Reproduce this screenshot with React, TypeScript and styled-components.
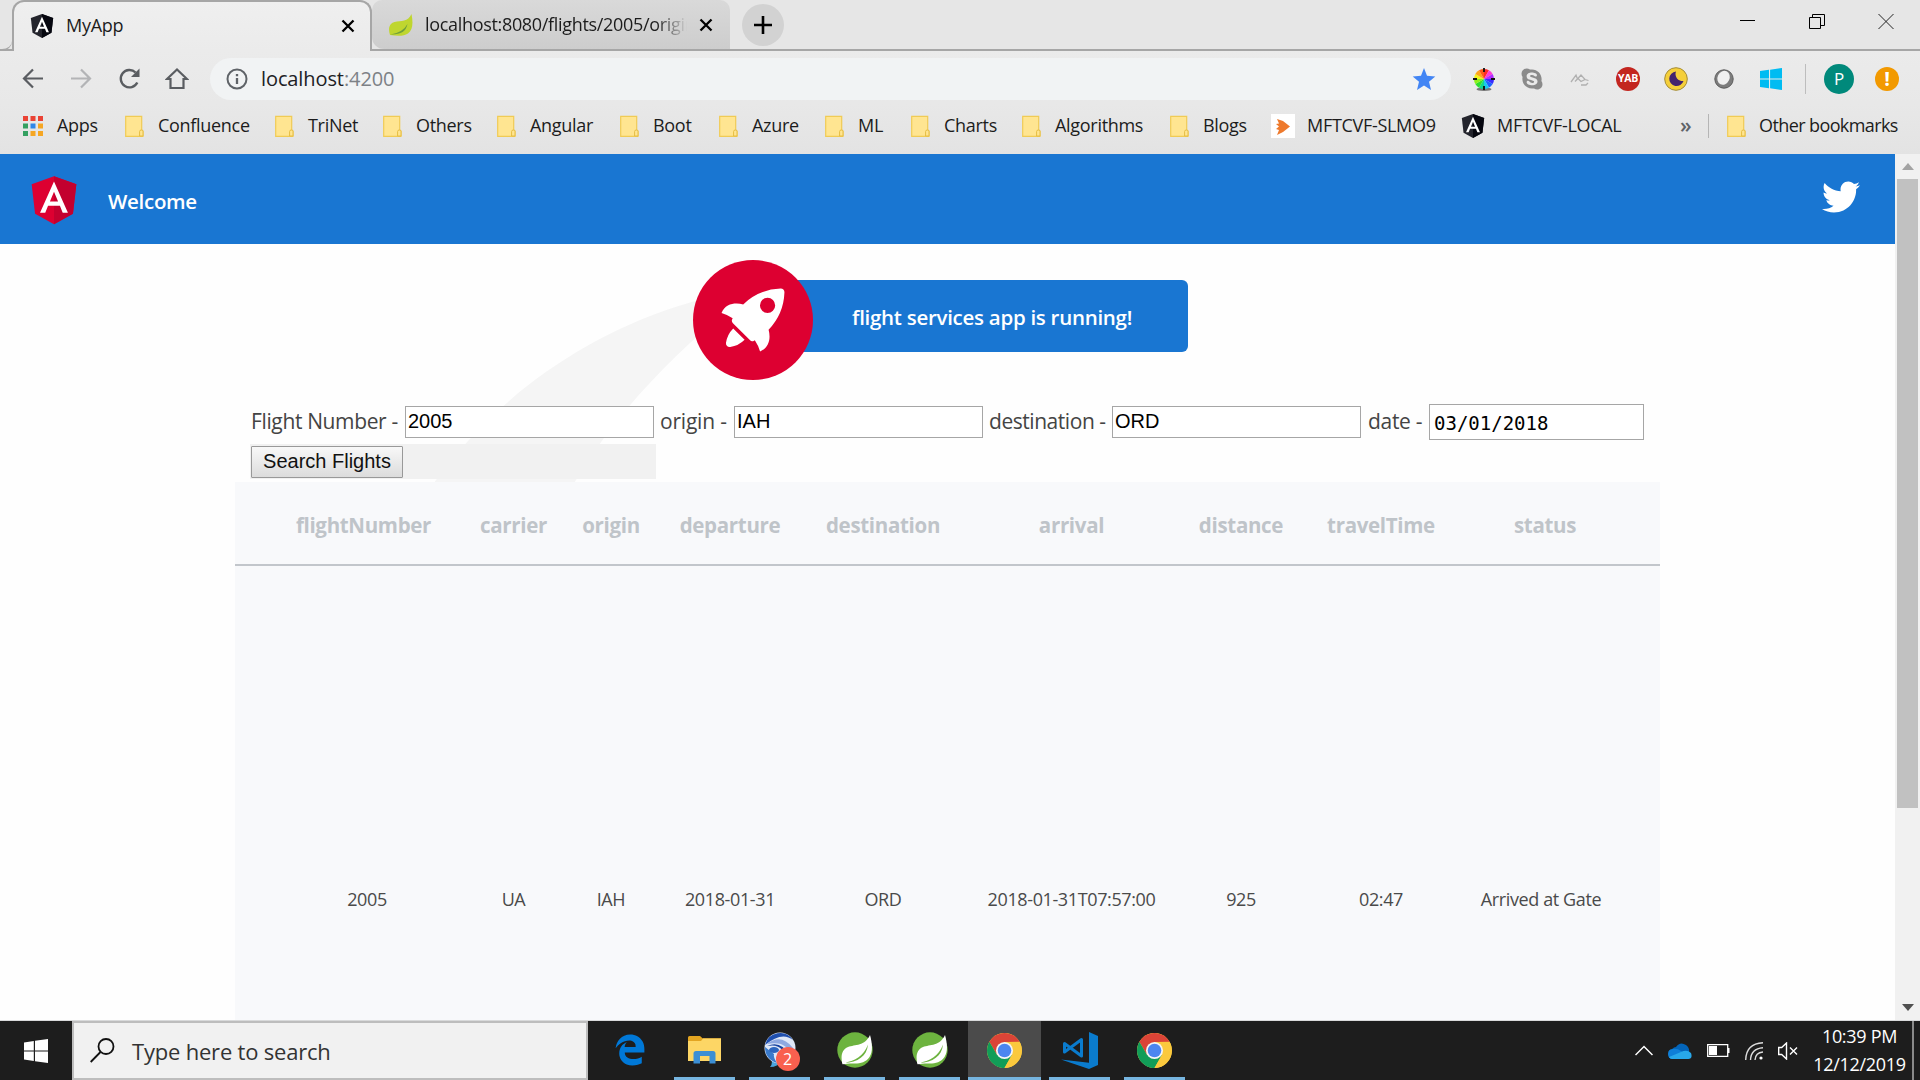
import React from "react";
import styled, { createGlobalStyle } from "styled-components";
import { FaTwitter, FaEdgeLegacy, FaSkype } from "react-icons/fa";

const ui = `"Segoe UI", "Open Sans", "Noto Sans", sans-serif`;
const arial = `"Liberation Sans", Arial, sans-serif`;

const GlobalStyle = createGlobalStyle`
  *, *::before, *::after { box-sizing: border-box; }
  html, body { margin: 0; padding: 0; overflow: hidden; }
  body { font-family: ${ui}; background: #fff; }
  svg { display: block; flex: none; }
`;

const Screen = styled.div`
  width: 1920px;
  height: 1080px;
  display: flex;
  flex-direction: column;
  overflow: hidden;
`;

/* ---------- browser chrome ---------- */

const TabStrip = styled.header`
  height: 51px;
  display: flex;
  flex: none;
  background: #e6e6e6;
  box-shadow: inset 0 -2px 0 #a6a6a6;
`;

const TabLead = styled.div`
  width: 12px;
  border-bottom: 2px solid #a6a6a6;
  border-bottom-right-radius: 10px;
`;

const Tab = styled.div<{ $active?: boolean }>`
  width: ${(p) => (p.$active ? 360 : 358)}px;
  height: ${(p) => (p.$active ? 51 : 49)}px;
  display: flex;
  align-items: center;
  padding: ${(p) => (p.$active ? "0 15px 2px 16px" : "0 17px 0 16px")};
  border: ${(p) => (p.$active ? "2px solid #a6a6a6" : "0 solid transparent")};
  border-bottom: 0;
  border-radius: ${(p) => (p.$active ? "12px 12px 0 0" : "10px 10px 0 12px")};
  background: ${(p) => (p.$active ? "linear-gradient(#efefef, #ebebeb)" : "linear-gradient(#d9d9d9, #cdcdcd)")};
`;

const TabTitle = styled.span<{ $fade?: boolean }>`
  flex: 1;
  margin-left: 12px;
  margin-right: 12px;
  margin-top: -2px;
  font-size: 18px;
  line-height: 26px;
  letter-spacing: ${(p) => (p.$fade ? -0.32 : -0.25)}px;
  color: #1c1c1c;
  white-space: nowrap;
  overflow: hidden;
  ${(p) => p.$fade && "-webkit-mask-image: linear-gradient(90deg, #000 88%, transparent 100%);"}
`;

const NewTab = styled.div`
  width: 42px;
  height: 42px;
  margin: 4px 0 0 12px;
  border-radius: 50%;
  background: #d2d2d2;
  display: grid;
  place-items: center;
`;

const WindowButtons = styled.div`
  margin-left: auto;
  display: flex;
  gap: 53px;
  padding: 13px 26px 0 0;
`;

const Toolbar = styled.div`
  height: 53px;
  flex: none;
  display: flex;
  align-items: center;
  background: linear-gradient(#ebebeb, #e8e8e8);
  padding: 2px 21px 0 21px;
`;

const NavIcons = styled.div`
  display: flex;
  gap: 24px;
  width: 189px;
`;

const Omnibox = styled.div`
  width: 1241px;
  height: 42px;
  border-radius: 21px;
  background: #f1f3f4;
  display: flex;
  align-items: center;
  padding: 0 15px 0 16px;
`;

const Url = styled.span`
  flex: 1;
  margin-left: 13px;
  font-size: 20px;
  letter-spacing: -0.1px;
  color: #202124;
  line-height: 28px;
  span { color: #7d8186; }
`;

const Extensions = styled.div`
  display: flex;
  align-items: center;
  margin-left: 21px;
  gap: 24px;
`;

const ToolDivider = styled.div`
  width: 1px;
  height: 30px;
  background: #bdbdbd;
  margin: 0 18px 0 23px;
`;

const Round = styled.div<{ $size: number; $bg: string; $font: number; $bold?: boolean; $end?: boolean }>`
  width: ${(p) => p.$size}px;
  height: ${(p) => p.$size}px;
  margin-left: ${(p) => (p.$end ? "auto" : "0")};
  border-radius: 50%;
  background: ${(p) => p.$bg};
  color: #fff;
  font-size: ${(p) => p.$font}px;
  font-weight: ${(p) => (p.$bold ? 700 : 400)};
  display: flex;
  align-items: center;
  justify-content: center;
  line-height: 1;
  letter-spacing: -0.3px;
`;

const Bookmarks = styled.nav`
  height: 50px;
  flex: none;
  display: flex;
  align-items: center;
  background: linear-gradient(#e8e8e8, #e3e3e3);
  padding: 0 0 6px 23px;
`;

const Bookmark = styled.div<{ $w: number; $gap: number; $ls?: number }>`
  width: ${(p) => p.$w}px;
  flex: none;
  display: flex;
  align-items: center;
  gap: ${(p) => p.$gap}px;
  font-size: 18px;
  letter-spacing: ${(p) => p.$ls ?? -0.3}px;
  color: #1c1c1c;
  white-space: nowrap;
`;

const BookmarkName = styled.span`
  line-height: 26px;
  padding-bottom: 2px;
`;

const BookmarkIconBox = styled.div`
  width: 24px;
  height: 24px;
  background: #fff;
`;

const More = styled.span`
  width: 28px;
  font-size: 21px;
  font-weight: 600;
  color: #5f6368;
  line-height: 22px;
  padding-bottom: 2px;
`;

const BookmarkDivider = styled.div`
  width: 1px;
  height: 24px;
  background: #b5b5b5;
  margin-right: 18px;
`;

/* ---------- web page ---------- */

const Viewport = styled.div`
  height: 867px;
  flex: none;
  display: flex;
  overflow: hidden;
  border-bottom: 1px solid #d9dadb;
`;

const Page = styled.main`
  width: 1895px;
  position: relative;
  z-index: 0;
  overflow: hidden;
  background: #fefefe;
  display: flex;
  flex-direction: column;
`;

const AppBar = styled.div`
  height: 90px;
  flex: none;
  background: #1976d2;
  color: #fff;
  display: flex;
  align-items: center;
  padding: 0 35px 0 24px;
`;

const AppTitle = styled.span`
  flex: 1;
  margin-left: 24px;
  padding-top: 3px;
  font-size: 20.500px;
  line-height: 30px;
  font-weight: 600;
  letter-spacing: -0.3px;
`;

const BirdLink = styled.a`
  color: #fff;
  padding-bottom: 5px;
`;

const Smoke = styled.svg`
  position: absolute;
  left: 324px;
  top: 141px;
  z-index: -1;
`;

const Hero = styled.section`
  height: 160px;
  flex: none;
  display: flex;
  align-items: flex-start;
  padding: 16px 0 0 693px;
`;

const HeroCard = styled.div`
  width: 435px;
  height: 72px;
  margin: 20px 0 0 -60px;
  border-radius: 6px;
  background: #1976d2;
  color: #fff;
  font-size: 20.500px;
  font-weight: 600;
  letter-spacing: -0.28px;
  display: flex;
  align-items: center;
  padding: 2px 0 0 99px;
  white-space: nowrap;
`;

const RocketWrap = styled.div`
  z-index: 1;
`;

const SearchRow = styled.div`
  height: 36px;
  flex: none;
  padding-left: 251px;
  display: flex;
  align-items: center;
`;

const Label = styled.label<{ $w: number; $pl?: number; $ls?: number }>`
  width: ${(p) => p.$w}px;
  flex: none;
  padding: 0 0 2px ${(p) => p.$pl ?? 0}px;
  font-size: 21px;
  line-height: 30px;
  letter-spacing: ${(p) => p.$ls ?? -0.3}px;
  color: #444;
  white-space: nowrap;
`;

const Field = styled.input`
  width: 249px;
  height: 32px;
  margin-right: 6px;
  padding: 0 2px 2px;
  border: 1px solid #a6a6a6;
  border-radius: 0;
  background: #fff;
  font: 20px ${arial};
  color: #000;
  outline: none;
`;

const DateField = styled(Field)`
  width: 215px;
  height: 36px;
  padding: 2px 4px 0;
  margin: 0;
  font: 19px "DejaVu Sans Mono", monospace;
`;

const ButtonStrip = styled.div`
  width: 406px;
  height: 35px;
  flex: none;
  margin: 4px 0 3px 250px;
  padding: 2px 0 0 1px;
  background: #f1f1f1;
`;

const SearchButton = styled.button`
  display: block;
  width: 152px;
  height: 32px;
  padding: 0 0 2px;
  border: 1px solid #999;
  border-radius: 1px;
  background: linear-gradient(#f8f8f8, #dcdcdc);
  font: 20px ${arial};
  color: #111;
  white-space: nowrap;
`;

const Table = styled.div`
  width: 1425px;
  height: 540px;
  flex: none;
  margin-left: 235px;
  background: #f8f9fb;
`;

const Row = styled.div<{ $head?: boolean }>`
  display: grid;
  grid-template-columns: 221px 115px 80px 158px 148px 229px 110px 170px 194px;
  align-items: center;
  height: ${(p) => (p.$head ? 84 : 666)}px;
  padding-top: ${(p) => (p.$head ? 3 : 0)}px;
  border-bottom: ${(p) => (p.$head ? "2px solid #c2c6cb" : "0")};
  font-size: ${(p) => (p.$head ? 20.5 : 18)}px;
  font-weight: ${(p) => (p.$head ? 700 : 400)};
  letter-spacing: ${(p) => (p.$head ? -0.32 : -0.38)}px;
  color: ${(p) => (p.$head ? "#bfc4c9" : "#4a4a4a")};
`;

const Cell = styled.div<{ $pl?: number; $pr?: number }>`
  text-align: center;
  white-space: nowrap;
  line-height: 28px;
  padding-left: ${(p) => p.$pl ?? 0}px;
  padding-right: ${(p) => p.$pr ?? 0}px;
`;

const Scrollbar = styled.div`
  width: 25px;
  background: #f1f1f1;
  display: flex;
  flex-direction: column;
  align-items: center;
  justify-content: space-between;
`;

const Thumb = styled.div`
  width: 21px;
  height: 629px;
  margin-bottom: auto;
  background: #c1c1c1;
`;

const ArrowSlot = styled.div`
  height: 25px;
  display: grid;
  place-items: center;
`;

/* ---------- taskbar ---------- */

const Taskbar = styled.footer`
  height: 59px;
  flex: none;
  background: #1d1d1d;
  display: flex;
`;

const Start = styled.div`
  width: 72px;
  display: grid;
  place-items: center;
`;

const SearchBox = styled.div`
  width: 516px;
  border: 2px solid #bdbdbd;
  background: #f1f1f1;
  display: flex;
  align-items: center;
  padding-left: 16px;
  gap: 17px;
  font-size: 22px;
  letter-spacing: -0.2px;
  color: #333;
  span { line-height: 30px; padding-top: 1px; }
`;

const Apps = styled.div`
  display: flex;
  padding-left: 5px;
`;

const TaskButton = styled.div<{ $active?: boolean; $running?: boolean }>`
  width: 73px;
  margin-right: 2px;
  display: flex;
  flex-direction: column;
  align-items: center;
  justify-content: space-between;
  background: ${(p) => (p.$active ? "#4b4b4b" : "transparent")};
  &::after {
    content: "";
    width: ${(p) => (p.$active ? "73px" : "61px")};
    height: 3px;
    background: ${(p) => (p.$running ? "#76b5e0" : "transparent")};
  }
`;

const AppIcon = styled.div`
  flex: 1;
  display: grid;
  place-items: center;
  padding-top: 2px;
  position: relative;
`;

const Badge = styled.div`
  position: absolute;
  left: 14px;
  top: 26px;
  width: 24px;
  height: 24px;
  border-radius: 50%;
  background: #f9604f;
  color: #fff;
  font-size: 16px;
  line-height: 24px;
  text-align: center;
`;

const Tray = styled.div`
  margin-left: auto;
  display: flex;
  align-items: center;
`;

const TrayIcons = styled.div`
  display: flex;
  align-items: center;
  gap: 15px;
  margin-right: 14px;
`;

const Clock = styled.div`
  width: 95px;
  margin-right: 5px;
  padding-bottom: 2px;
  color: #fff;
  font-size: 18px;
  line-height: 28px;
  letter-spacing: -0.3px;
  text-align: center;
  white-space: nowrap;
`;

const ShowDesktop = styled.div`
  width: 8px;
  height: 59px;
  border-left: 2px solid #8a8a8a;
`;

/* ---------- drawings ---------- */

const Shield = ({ size, left, right, view = "0 0 250 250" }: { size: number; left: string; right: string; view?: string }) => (
  <svg width={size} height={size} viewBox={view}>
    <path fill={left} d="M125 30 31.9 63.2l14.2 123.1L125 230l78.9-43.7 14.2-123.1z" />
    <path fill={right} d="M125 30v200l78.9-43.7 14.2-123.1L125 30z" />
    <path fill="#fff" d="M125 52.1 66.8 182.6h21.7l11.7-29.2h49.4l11.7 29.2H183L125 52.1zm17 83.3h-34l17-40.9 17 40.9z" />
  </svg>
);

const Cross = () => (
  <svg width="14" height="14" viewBox="0 0 14 14" stroke="#000" strokeWidth="2.3"><path d="M1.5 1.5l11 11M12.5 1.5l-11 11" /></svg>
);

const Folder = () => (
  <svg width="19" height="22" viewBox="0 0 19 22">
    <path d="M.7 1.3h16v13.4l1.3 1.2v5.4H.7z" fill="#ffe591" stroke="#f0cb55" strokeWidth="1.2" />
    <path d="M14.6 21v-4.5q0-1.5 1.7-1.5t1.7 1.5V21z" fill="#ffe591" stroke="#e6bd42" strokeWidth="1" />
  </svg>
);

const AppsGrid = () => {
  const colors = ["#ea4335", "#ea4335", "#ea4335", "#34a061", "#3086e8", "#f5a623", "#34a061", "#f5a623", "#f5a623"];
  return (
    <svg width="20" height="20" viewBox="0 0 20 20">
      {colors.map((c, i) => <rect key={i} x={(i % 3) * 7.5} y={Math.floor(i / 3) * 7.5} width="5" height="5" fill={c} />)}
    </svg>
  );
};

const LimeLeaf = () => (
  <svg width="25" height="24" viewBox="0 0 25 24">
    <path d="M23.500 1c1.800 9 1.300 16-3.500 19.500-4.500 3-11 2.500-18 1.500C0 16 1 10.500 6.500 9 13 7.500 20 9 23.500 1z" fill="#bfd62f" />
    <path d="M2.500 21.500Q15 19.500 19.500 11 17.500 22 2.500 21.500z" fill="#6f9f3c" />
  </svg>
);

const ColorWheel = () => {
  const colors = ["#ff2a2a", "#ff3bd4", "#b02cff", "#3a2cff", "#1a63ff", "#18c8f0", "#10d890", "#2ce02c", "#8cf01a", "#f4f41a", "#ffa41a", "#ff5a1a"];
  return (
    <svg width="24" height="24" viewBox="-12 -12 24 24">
      <ellipse cx="0" cy="10.3" rx="7.5" ry="1.7" fill="#777" />
      {colors.map((c, i) => {
        const a = ((i * 30 - 90) * Math.PI) / 180;
        const b = ((i * 30 - 60) * Math.PI) / 180;
        return <path key={c} fill={c} d={`M0 0L${10 * Math.cos(a)} ${10 * Math.sin(a)}A10 10 0 0 1 ${10 * Math.cos(b)} ${10 * Math.sin(b)}z`} />;
      })}
      <path d="M0-11v4M0 7v4M-11 0h4M7 0h4" stroke="#111" strokeWidth="1.8" />
    </svg>
  );
};

const WindowsLogo = ({ size, color }: { size: number; color: string }) => (
  <svg width={size} height={size} viewBox="0 0 24 24" fill={color}>
    <path d="M0 3.4 9.8 2v9.4H0zM11 1.8 24 0v11.4H11zM0 12.6h9.8V22L0 20.6zM11 12.6h13V24l-13-1.8z" />
  </svg>
);

const SpringLeaf = () => (
  <svg width="36" height="36" viewBox="0 0 36 36">
    <circle cx="18" cy="18" r="17.700" fill="#6db33f" />
    <path d="M33 3c2.200 8 3.200 16-.5 22-4 6-11 7-17 6.500-4 0-7 .5-10 .8C3.500 25 4.500 17.500 11 15c7-2.500 17-1 22-12z" fill="#fff" />
    <path d="M7 30.800C17 29.500 27 24 31 12.500 30 24 21 30.500 7 30.800z" fill="#6db33f" />
    <circle cx="7.300" cy="30.300" r="1.900" fill="#fff" />
  </svg>
);

const Chrome = () => (
  <svg width="35" height="35" viewBox="-17 -17 34 34">
    <circle r="17" fill="#fbc93d" />
    <path d="M-14.7-8.5A17 17 0 0 1 14.7-8.5L0-8.2-7.3 4.2z" fill="#db4437" />
    <path d="M-14.7-8.5A17 17 0 0 0 0 17L7.3 4.2-7.3 4.2z" fill="#119d58" />
    <path d="M0-8.2H14.7A17 17 0 0 1 0 17L7.3 4.2z" fill="#fbc93d" />
    <circle r="8.3" fill="#f4f4f4" />
    <circle r="6.6" fill="#4c85f0" />
  </svg>
);

const Explorer = () => (
  <svg width="33" height="28" viewBox="0 0 33 28">
    <path d="M0 1.5Q0 0 1.5 0H12l2.5 2.3H33V9H0z" fill="#e3a521" />
    <path d="M0 5h13l2-2.5h18V25H0z" fill="#fdd665" />
    <path d="M5.5 27.5v-10q0-2.5 2.5-2.5h17q2.5 0 2.5 2.5v10h-6V20H12v7.5z" fill="#3c8fd4" />
  </svg>
);

const BlueSwirl = () => (
  <svg width="36" height="36" viewBox="0 0 36 36">
    <path d="M8 26q4 4 0 9 8 0 11-6z" fill="#49a4dc" />
    <circle cx="18" cy="16" r="15.5" fill="#dfe8f8" />
    <path d="M3 13A15.5 15.5 0 0 1 31 8Q20-1 3 13z" fill="#1f4fae" />
    <path d="M5 12Q19 1 31 16l-2 9Q26 8 5 12z" fill="#8fa9e0" />
    <path d="M5 14q14-6 22 9l-7-5q-4-6-15-4z" fill="#17439f" />
    <path d="M3 15q0 12 12 16-4-6-3-9z" fill="#3a7bcb" />
    <ellipse cx="12" cy="18" rx="5" ry="3" fill="#2d66be" />
  </svg>
);

const VsCode = () => (
  <svg width="37" height="37" viewBox="0 0 37 37">
    <path d="M28 0l9 4v29l-9 4L0 27.500l28 3.200z" fill="#0a7bcd" />
    <path d="M3.500 11.500L20.500 24V7.500L3.500 20z" fill="none" stroke="#0a7bcd" strokeWidth="3" strokeLinejoin="round" />
  </svg>
);

const Rocket = () => (
  <svg width="120" height="120" viewBox="0 0 101.678 101.678">
    <circle cx="50.839" cy="50.839" r="50.839" fill="#dd0031" />
    <g transform="translate(24.185 24.185)" fill="#fff">
      <path d="M3.4,42.615a3.084,3.084,0,0,0,3.553,3.553,21.419,21.419,0,0,0,12.215-6.107L9.511,30.4A21.419,21.419,0,0,0,3.4,42.615Z" transform="translate(0.371 3.363)" />
      <path d="M53.3,3.221A3.09,3.09,0,0,0,50.081,0,48.227,48.227,0,0,0,18.322,13.437c-6-1.666-14.991-1.221-18.322,7.218A33.892,33.892,0,0,1,9.439,25.1l-.333.666a3.013,3.013,0,0,0,.555,3.553L23.985,43.641a2.9,2.9,0,0,0,3.553.555l.666-.333A33.892,33.892,0,0,1,32.647,53.3c8.55-3.664,8.884-12.326,7.218-18.322A48.227,48.227,0,0,0,53.3,3.221ZM34.424,9.772a6.439,6.439,0,1,1,9.106,9.106,6.368,6.368,0,0,1-9.106,0A6.467,6.467,0,0,1,34.424,9.772Z" />
    </g>
  </svg>
);

/* ---------- data ---------- */

const folders: { name: string; w: number }[] = [
  { name: "Confluence", w: 150 },
  { name: "TriNet", w: 108 },
  { name: "Others", w: 114 },
  { name: "Angular", w: 123 },
  { name: "Boot", w: 99 },
  { name: "Azure", w: 106 },
  { name: "ML", w: 86 },
  { name: "Charts", w: 111 },
  { name: "Algorithms", w: 148 },
  { name: "Blogs", w: 101 },
];

const headers = ["flightNumber", "carrier", "origin", "departure", "destination", "arrival", "distance", "travelTime", "status"];
const flight = ["2005", "UA", "IAH", "2018-01-31", "ORD", "2018-01-31T07:57:00", "925", "02:47", "Arrived at Gate"];

export default function App() {
  return (
    <Screen>
      <GlobalStyle />
      <TabStrip>
        <TabLead />
        <Tab $active>
          <Shield size={24} left="#23242c" right="#06070f" view="25 30 200 200" />
          <TabTitle>MyApp</TabTitle>
          <Cross />
        </Tab>
        <Tab>
          <LimeLeaf />
          <TabTitle $fade>localhost:8080/flights/2005/origin</TabTitle>
          <Cross />
        </Tab>
        <NewTab>
          <svg width="18" height="18" viewBox="0 0 18 18" stroke="#000" strokeWidth="2.6"><path d="M9 0v18M0 9h18" /></svg>
        </NewTab>
        <WindowButtons>
          <svg width="16" height="16" viewBox="0 0 16 16"><path d="M0 7.500h15" stroke="#000" /></svg>
          <svg width="16" height="17" viewBox="0 0 16 17" fill="none" stroke="#000"><path d="M.5 4.500h11v11H.5zM3.500 4V1.500h12v11h-3.500" /></svg>
          <svg width="16" height="17" viewBox="0 0 16 17" stroke="#222"><path d="M.5 1l15 15M15.500 1l-15 15" /></svg>
        </WindowButtons>
      </TabStrip>

      <Toolbar>
        <NavIcons>
          <svg width="24" height="24" viewBox="0 0 24 24" fill="none" stroke="#5a5d61" strokeWidth="2.200"><path d="M22 11.500H4M12 2.500l-9 9 9 9" /></svg>
          <svg width="24" height="24" viewBox="0 0 24 24" fill="none" stroke="#b3b4b6" strokeWidth="2.200"><path d="M2 11.500h18M12 2.500l9 9-9 9" /></svg>
          <svg width="24" height="24" viewBox="0 0 24 24" fill="none" stroke="#5a5d61" strokeWidth="2.400"><path d="M20.300 15.500A8.700 8.700 0 1 1 18.600 5.500" /><path d="M22.500 1.500v8.500h-8.500z" fill="#5a5d61" stroke="none" /></svg>
          <svg width="24" height="24" viewBox="0 0 24 24" fill="none" stroke="#5a5d61" strokeWidth="2.200"><path d="M2 12L12 2.500 22 12h-3.500v9h-13v-9z" /></svg>
        </NavIcons>
        <Omnibox>
          <svg width="22" height="22" viewBox="0 0 22 22" fill="none" stroke="#5f6368" strokeWidth="2"><circle cx="11" cy="11" r="9.500" /><path d="M11 10v6M11 6v2.300" strokeWidth="2.300" /></svg>
          <Url>localhost<span>:4200</span></Url>
          <svg width="24" height="24" viewBox="0 0 24 24" fill="#4285f4"><path d="M12 1l3 7.800 8.300.7-6.300 5.300 2 8.200-7-4.400L5 23l2-8.200L.7 9.500l8.300-.7z" /></svg>
        </Omnibox>
        <Extensions>
          <ColorWheel />
          <FaSkype size={24} color="#8b8b8b" />
          <svg width="24" height="24" viewBox="0 0 24 24" fill="none" stroke="#b0b0b0" strokeWidth="1.300"><path d="M3 15l5-7 1.500 4L13 8l4 4.500 3.500 1M7 14.500l3-3 3 3 4-2M13 18h5l2-2" /></svg>
          <Round $size={24} $bg="#c3261f" $font={10.5} $bold>YAB</Round>
          <svg width="24" height="24" viewBox="0 0 24 24"><circle cx="12" cy="12" r="11.300" fill="#f5cf3a" stroke="#a48c38" /><path d="M12 4.500a7.300 7.300 0 1 0 7.500 9.500A7 7 0 0 1 12 4.500z" fill="#43246e" /></svg>
          <svg width="24" height="24" viewBox="0 0 24 24"><circle cx="12" cy="12" r="9.200" fill="#7c7c7c" stroke="#5c5c5c" /><ellipse cx="11.500" cy="11" rx="6" ry="7.200" fill="#f0f0f0" transform="rotate(25 12 11)" /></svg>
          <WindowsLogo size={22} color="#00bcf2" />
        </Extensions>
        <ToolDivider />
        <Round $size={30} $bg="#00897b" $font={17}>P</Round>
        <Round $size={24} $bg="#f29900" $font={20} $bold $end>!</Round>
      </Toolbar>

      <Bookmarks>
        <Bookmark $w={102} $gap={14}><AppsGrid /><BookmarkName>Apps</BookmarkName></Bookmark>
        {folders.map((f) => (
          <Bookmark key={f.name} $w={f.w} $gap={14}><Folder /><BookmarkName>{f.name}</BookmarkName></Bookmark>
        ))}
        <Bookmark $w={190} $gap={12}>
          <BookmarkIconBox>
            <svg width="24" height="24" viewBox="0 0 24 24"><path d="M6 5l6 2 7 5.500L12 18l-6 3 2-5-3-1 3-2.500L5 10l3-.5z" fill="#ee7a2d" /></svg>
          </BookmarkIconBox>
          <BookmarkName>MFTCVF-SLMO9</BookmarkName>
        </Bookmark>
        <Bookmark $w={219} $gap={12}>
          <Shield size={24} left="#23242c" right="#06070f" view="25 30 200 200" />
          <BookmarkName>MFTCVF-LOCAL</BookmarkName>
        </Bookmark>
        <More>»</More>
        <BookmarkDivider />
        <Bookmark $w={180} $gap={13} $ls={-0.6}><Folder /><BookmarkName>Other bookmarks</BookmarkName></Bookmark>
      </Bookmarks>

      <Viewport>
        <Page>
          <Smoke width="413" height="867" viewBox="0 0 516.119 1083.632">
            <path d="M644.6,141S143.02,215.537,147.049,870.207s342.774,201.755,342.774,201.755S404.659,847.213,388.815,762.2c-27.116-145.51-11.551-384.124,271.9-609.1C671.15,139.365,644.6,141,644.6,141Z" transform="translate(-147.025 -140.939)" fill="#f5f5f5" />
          </Smoke>
          <AppBar>
            <Shield size={60} left="#dd0031" right="#c3002f" />
            <AppTitle>Welcome</AppTitle>
            <BirdLink><FaTwitter size={38} /></BirdLink>
          </AppBar>
          <Hero>
            <RocketWrap><Rocket /></RocketWrap>
            <HeroCard><span>flight services app is running!</span></HeroCard>
          </Hero>
          <SearchRow>
            <Label $w={154} $ls={-0.36}>Flight Number -</Label>
            <Field defaultValue="2005" />
            <Label $w={74} $ls={-0.2}>origin -</Label>
            <Field defaultValue="IAH" />
            <Label $w={123} $ls={-0.45}>destination -</Label>
            <Field defaultValue="ORD" />
            <Label $w={62} $pl={1}>date -</Label>
            <DateField defaultValue="03/01/2018" />
          </SearchRow>
          <ButtonStrip><SearchButton>Search Flights</SearchButton></ButtonStrip>
          <Table>
            <Row $head>
              {headers.map((h, i) => <Cell key={h} $pl={i === 0 ? 36 : 0} $pr={i === 8 ? 36 : 0}>{h}</Cell>)}
            </Row>
            <Row>
              {flight.map((v, i) => <Cell key={i} $pl={i === 0 ? 43 : 0} $pr={i === 8 ? 44 : 0}>{v}</Cell>)}
            </Row>
          </Table>
        </Page>
        <Scrollbar>
          <ArrowSlot><svg width="12" height="7" viewBox="0 0 12 7"><path d="M0 7l6-7 6 7z" fill="#a3a3a3" /></svg></ArrowSlot>
          <Thumb />
          <ArrowSlot><svg width="12" height="7" viewBox="0 0 12 7"><path d="M0 0l6 7 6-7z" fill="#505050" /></svg></ArrowSlot>
        </Scrollbar>
      </Viewport>

      <Taskbar>
        <Start><WindowsLogo size={24} color="#fff" /></Start>
        <SearchBox>
          <svg width="25" height="25" viewBox="0 0 25 25" fill="none" stroke="#111" strokeWidth="1.800"><circle cx="16" cy="8.500" r="7.500" /><path d="M10.500 14L.7 24" /></svg>
          <span>Type here to search</span>
        </SearchBox>
        <Apps>
          <TaskButton><AppIcon><FaEdgeLegacy size={32} color="#0078d7" /></AppIcon></TaskButton>
          <TaskButton $running><AppIcon><Explorer /></AppIcon></TaskButton>
          <TaskButton $running><AppIcon><BlueSwirl /><Badge>2</Badge></AppIcon></TaskButton>
          <TaskButton $running><AppIcon><SpringLeaf /></AppIcon></TaskButton>
          <TaskButton $running><AppIcon><SpringLeaf /></AppIcon></TaskButton>
          <TaskButton $running $active><AppIcon><Chrome /></AppIcon></TaskButton>
          <TaskButton $running><AppIcon><VsCode /></AppIcon></TaskButton>
          <TaskButton $running><AppIcon><Chrome /></AppIcon></TaskButton>
        </Apps>
        <Tray>
          <TrayIcons>
            <svg width="18" height="11" viewBox="0 0 18 11" fill="none" stroke="#fff" strokeWidth="1.500"><path d="M.5 10L9 1.500l8.500 8.500" /></svg>
            <svg width="24" height="16" viewBox="0 0 24 16"><path d="M4 12Q2 5 8 4q4-6 10-2 4 3 3 8z" fill="#0364b8" /><path d="M5 16Q0 16 0 11t5-5q4-1 8 2l10 6-3 2z" fill="#0f7fd8" /><path d="M4 16q-2 0-3-2l12-5q6-3 10 1 2 6-3 6z" fill="#28a8ea" /></svg>
            <svg width="23" height="13" viewBox="0 0 23 13"><path d="M.7.700h20v11.600H.7z" fill="none" stroke="#fff" strokeWidth="1.300" /><path d="M2 2h8v9H2zM21 4h1.500v5H21z" fill="#fff" /></svg>
            <svg width="18" height="18" viewBox="0 0 18 18" fill="none" stroke="#ddd" strokeWidth="1.400"><path d="M.7 18Q1 1.500 18 .700M5.500 18Q6 6.500 18 5.700M10 18q.5-7.500 8-8" /><circle cx="16" cy="16" r="1.600" fill="#fff" stroke="none" /></svg>
            <svg width="20" height="18" viewBox="0 0 20 18" fill="none" stroke="#fff" strokeWidth="1.400"><path d="M.7 5.500h3L8.500 1v16l-4.800-4.500h-3zM12 5.500l7 7M19 5.500l-7 7" /></svg>
          </TrayIcons>
          <Clock>10:39 PM<br />12/12/2019</Clock>
          <ShowDesktop />
        </Tray>
      </Taskbar>
    </Screen>
  );
}
